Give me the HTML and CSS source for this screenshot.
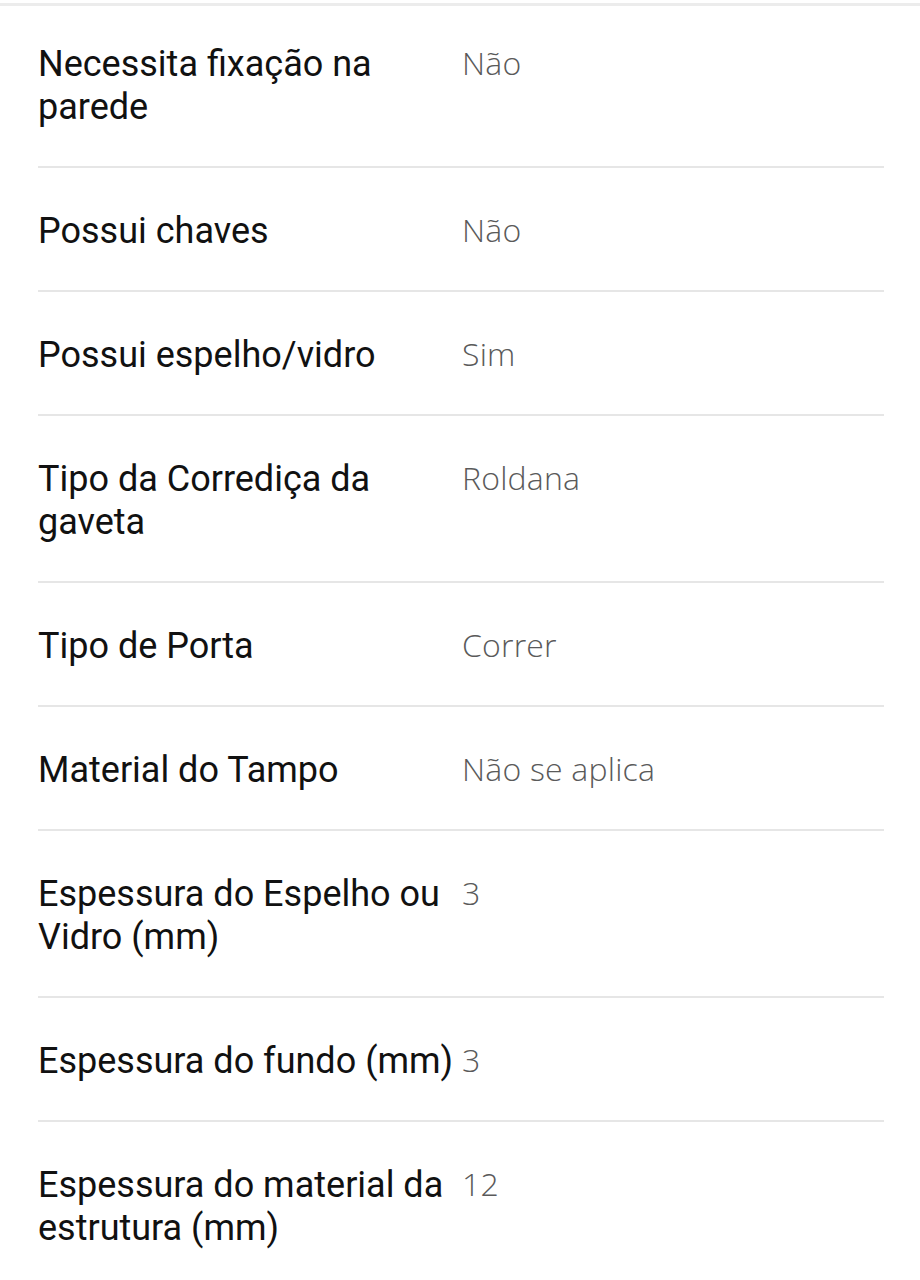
FILE: index.html
```html
<!DOCTYPE html>
<html lang="pt">
<head>
<meta charset="utf-8">
<link rel="stylesheet" href="styles.css">
</head>
<body>
<div class="topline"></div>
<dl class="specs">
  <div class="row first"><dt>Necessita fixação na parede</dt><dd>Não</dd></div>
  <div class="row"><dt>Possui chaves</dt><dd>Não</dd></div>
  <div class="row"><dt>Possui espelho/vidro</dt><dd>Sim</dd></div>
  <div class="row"><dt>Tipo da Corrediça da gaveta</dt><dd>Roldana</dd></div>
  <div class="row"><dt>Tipo de Porta</dt><dd>Correr</dd></div>
  <div class="row"><dt>Material do Tampo</dt><dd>Não se aplica</dd></div>
  <div class="row"><dt>Espessura do Espelho ou Vidro (mm)</dt><dd>3</dd></div>
  <div class="row"><dt>Espessura do fundo (mm)</dt><dd>3</dd></div>
  <div class="row"><dt>Espessura do material da estrutura (mm)</dt><dd>12</dd></div>
</dl>
</body>
</html>
```

FILE: styles.css
```css
html, body {
  margin: 0;
  padding: 0;
  background: #ffffff;
}
.topline {
  margin-top: 3px;
  height: 3px;
  background: #ececec;
}
.specs {
  margin: 0 36px 0 38px;
  padding: 0;
}
.row {
  display: grid;
  grid-template-columns: 418px 1fr;
  column-gap: 6px;
  padding: 42px 0 37px;
  border-bottom: 2px solid #e6e6e6;
}
.row.first {
  padding-top: 37px;
}
.row dt {
  font-family: Roboto, "Liberation Sans", sans-serif;
  font-size: 36px;
  line-height: 43px;
  color: #111111;
  margin: 0;
}
.row dd {
  margin: 0;
  font-family: "Open Sans", "Noto Sans", sans-serif;
  font-weight: 300;
  font-size: 32px;
  letter-spacing: 0.2px;
  line-height: 40px;
  color: #5a5a5a;
}
```
